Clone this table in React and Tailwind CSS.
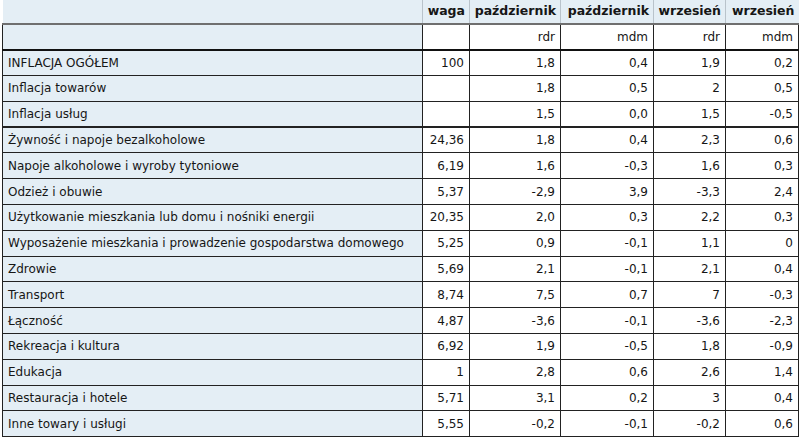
import React from "react";

const rows = [
    { name: "INFLACJA OGÓŁEM", waga: "100", v: ["1,8", "0,4", "1,9", "0,2"] },
    { name: "Inflacja towarów", waga: "", v: ["1,8", "0,5", "2", "0,5"] },
    { name: "Inflacja usług", waga: "", v: ["1,5", "0,0", "1,5", "-0,5"], thick: true },
    { name: "Żywność i napoje bezalkoholowe", waga: "24,36", v: ["1,8", "0,4", "2,3", "0,6"] },
    { name: "Napoje alkoholowe i wyroby tytoniowe", waga: "6,19", v: ["1,6", "-0,3", "1,6", "0,3"] },
    { name: "Odzież i obuwie", waga: "5,37", v: ["-2,9", "3,9", "-3,3", "2,4"] },
    { name: "Użytkowanie mieszkania lub domu i nośniki energii", waga: "20,35", v: ["2,0", "0,3", "2,2", "0,3"] },
    { name: "Wyposażenie mieszkania i prowadzenie gospodarstwa domowego", waga: "5,25", v: ["0,9", "-0,1", "1,1", "0"] },
    { name: "Zdrowie", waga: "5,69", v: ["2,1", "-0,1", "2,1", "0,4"] },
    { name: "Transport", waga: "8,74", v: ["7,5", "0,7", "7", "-0,3"] },
    { name: "Łączność", waga: "4,87", v: ["-3,6", "-0,1", "-3,6", "-2,3"] },
    { name: "Rekreacja i kultura", waga: "6,92", v: ["1,9", "-0,5", "1,8", "-0,9"] },
    { name: "Edukacja", waga: "1", v: ["2,8", "0,6", "2,6", "1,4"] },
    { name: "Restauracja i hotele", waga: "5,71", v: ["3,1", "0,2", "3", "0,4"] },
    { name: "Inne towary i usługi", waga: "5,55", v: ["-0,2", "-0,1", "-0,2", "0,6"] },
];

const headers = ["waga", "październik", "październik", "wrzesień", "wrzesień"];
const subs = ["", "rdr", "mdm", "rdr", "mdm"];

export default function App() {
    return (
        <div className="w-[800px] h-[441px] bg-white overflow-hidden text-[#161616]" style={{ fontFamily: "'DejaVu Sans', Verdana, sans-serif" }}>
            <table className="ml-[2px] w-[796px] table-fixed border-collapse text-[12px]">
                <colgroup>
                    <col className="w-[420px]" />
                    <col className="w-[47px]" />
                    <col className="w-[91px]" />
                    <col className="w-[93px]" />
                    <col className="w-[72px]" />
                    <col className="w-[73px]" />
                </colgroup>
                <thead>
                    <tr className="h-[24px] bg-[#e4eef5] border-b-2 border-[#6f6f6f]">
                        <th className="p-0"></th>
                        {headers.map((h, i) => (
                            <th key={i} className="px-[4px] text-right font-bold text-[12.5px] border-l border-[#b9c3cb]">
                                {h}
                            </th>
                        ))}
                    </tr>
                </thead>
                <tbody>
                    {/* wiersz z jednostkami */}
                    <tr className="h-[25.8px] border-b-2 border-[#111]">
                        <td className="bg-[#e4eef5] border-l border-[#222]"></td>
                        {subs.map((s, i) => (
                            <td key={i} className="px-[5px] text-right border-l border-r border-[#222]">{s}</td>
                        ))}
                    </tr>
                    {rows.map((r) => (
                        <tr key={r.name} className={`h-[25.8px] ${r.thick ? "border-b-2" : "border-b"} border-[#222]`}>
                            <td className="bg-[#e4eef5] pl-[5px] border-l border-[#222] whitespace-nowrap">{r.name}</td>
                            <td className="px-[5px] text-right border-l border-r border-[#222]">{r.waga}</td>
                            {r.v.map((x, i) => (
                                <td key={i} className="px-[5px] text-right border-l border-r border-[#222]">{x}</td>
                            ))}
                        </tr>
                    ))}
                </tbody>
            </table>
        </div>
    );
}
